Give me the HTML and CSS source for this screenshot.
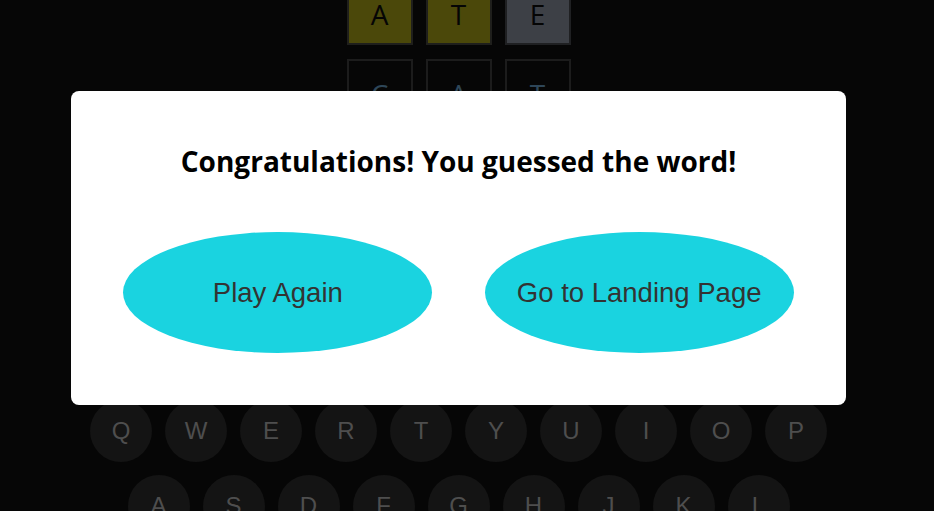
FILE: index.html
```html
<!DOCTYPE html>
<html lang="en">
<head>
<meta charset="utf-8">
<title>Word Game</title>
<link rel="stylesheet" href="styles.css">
</head>
<body>
<div class="page">
  <div class="board">
    <div class="row">
      <div class="tile present">A</div>
      <div class="tile present">T</div>
      <div class="tile absent">E</div>
    </div>
    <div class="row">
      <div class="tile typed">C</div>
      <div class="tile typed">A</div>
      <div class="tile typed">T</div>
    </div>
    <div class="row"><div class="tile"></div><div class="tile"></div><div class="tile"></div></div>
    <div class="row"><div class="tile"></div><div class="tile"></div><div class="tile"></div></div>
    <div class="row"><div class="tile"></div><div class="tile"></div><div class="tile"></div></div>
  </div>
  <div class="keyboard">
    <div class="krow">
      <div class="key">Q</div><div class="key">W</div><div class="key">E</div><div class="key">R</div><div class="key">T</div><div class="key">Y</div><div class="key">U</div><div class="key">I</div><div class="key">O</div><div class="key">P</div>
    </div>
    <div class="krow">
      <div class="key">A</div><div class="key">S</div><div class="key">D</div><div class="key">F</div><div class="key">G</div><div class="key">H</div><div class="key">J</div><div class="key">K</div><div class="key">L</div>
    </div>
  </div>
</div>
<div class="overlay">
  <div class="modal">
    <h2 class="modal-title">Congratulations! You guessed the word!</h2>
    <div class="actions">
      <button class="pill">Play Again</button>
      <button class="pill">Go to Landing Page</button>
    </div>
  </div>
</div>
</body>
</html>
```

FILE: styles.css
```css
html, body {
  margin: 0;
  padding: 0;
  background: #060606;
  height: 511px;
  overflow: hidden;
}

.page {
  width: 917px;
  display: flex;
  flex-direction: column;
  align-items: center;
}

.board {
  margin-top: -21px;
  display: flex;
  flex-direction: column;
  gap: 14px;
}

.row {
  display: flex;
  gap: 13px;
}

.tile {
  width: 62px;
  height: 58px;
  padding-top: 4px;
  border: 2px solid #1c1c1c;
  box-sizing: content-box;
  display: flex;
  align-items: center;
  justify-content: center;
  font-family: "Open Sans", "DejaVu Sans", sans-serif;
  font-size: 28px;
  color: #050505;
}

.tile.present {
  background: #4b480a;
  border-color: #1f1f1c;
}

.tile.absent {
  background: #3d4046;
  border-color: #1f2022;
}

.tile.typed {
  color: #2e4658;
}

.keyboard {
  margin-top: 35px;
  display: flex;
  flex-direction: column;
  align-items: center;
  gap: 13px;
}

.krow {
  display: flex;
  gap: 13px;
}

.key {
  width: 62px;
  height: 62px;
  border-radius: 50%;
  background: #141414;
  color: #4e4e4e;
  font-family: "Liberation Sans", Arial, sans-serif;
  font-size: 24px;
  display: flex;
  align-items: center;
  justify-content: center;
}

.overlay {
  position: fixed;
  inset: 0;
}

.modal {
  position: absolute;
  left: 71px;
  top: 91px;
  width: 775px;
  height: 314px;
  box-sizing: border-box;
  background: #ffffff;
  border-radius: 8px;
  padding-top: 52px;
  display: flex;
  flex-direction: column;
  align-items: center;
}

.modal-title {
  margin: 0;
  font-family: "Open Sans", "Noto Sans", sans-serif;
  font-weight: 700;
  font-size: 28px;
  line-height: 36px;
  color: #000;
}

.actions {
  margin-top: 53px;
  width: 100%;
  display: flex;
  justify-content: space-evenly;
}

.pill {
  width: 309px;
  height: 121px;
  border: none;
  border-radius: 50%;
  background: #1ad3e0;
  color: #333333;
  font-family: "Liberation Sans", Arial, sans-serif;
  font-size: 27.5px;
  padding: 0;
  cursor: pointer;
}
```
